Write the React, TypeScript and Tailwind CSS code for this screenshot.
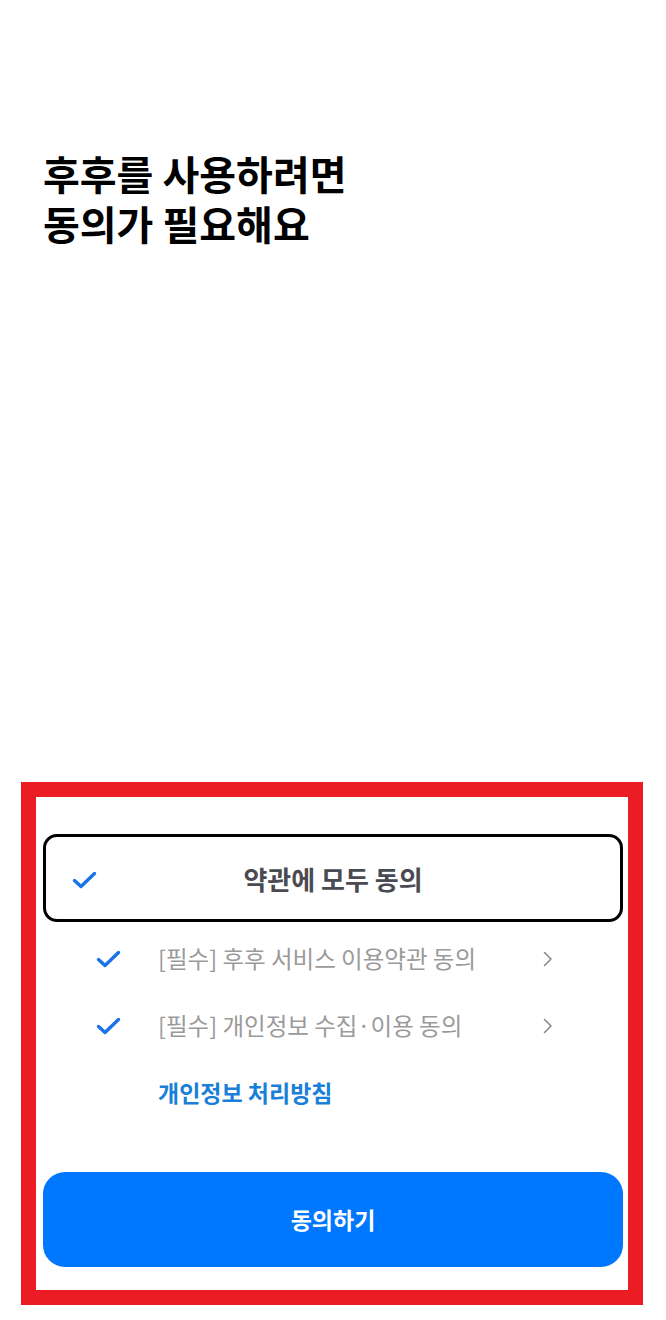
import React from "react";

const font = { fontFamily: '"Noto Sans CJK KR", "Noto Sans", sans-serif' };

function Check() {
  return (
    <svg width="25" height="18" viewBox="0 0 25 18" fill="none">
      <path d="M2.5 9.5 L9 15.5 L22.5 2.5" stroke="#1a73e8" strokeWidth="3.4" strokeLinecap="round" strokeLinejoin="round" />
    </svg>
  );
}

function Chevron() {
  return (
    <svg width="10" height="16" viewBox="0 0 10 16" fill="none">
      <path d="M1.5 1.5 L8 8 L1.5 14.5" stroke="#8a8a8a" strokeWidth="1.6" strokeLinecap="round" strokeLinejoin="round" />
    </svg>
  );
}

function Row({ text }: { text: string }) {
  return (
    <div className="flex h-[67px] items-center">
      <div className="flex w-[78px] justify-end">
        <Check />
      </div>
      <span className="ml-[37px] flex-1 text-[23.5px] text-[#9a9a9a]">{text}</span>
      <div className="mr-[70px]">
        <Chevron />
      </div>
    </div>
  );
}

export default function App() {
  return (
    <div className="flex h-[1320px] w-[666px] flex-col bg-white" style={font}>
      <h1 className="flex flex-col pl-[43px] pt-[148px] text-[40px] font-bold leading-[50px] text-black">
        <span className="block h-[50px]">후후를 사용하려면</span>
        <span className="block h-[50px]">동의가 필요해요</span>
      </h1>
      <div className="mt-auto mb-[15px] ml-[21px] w-[622px] border-[15px] border-[#ec1c24] pl-[7px] pr-[5px] pt-[37px] pb-[23px]">
        <div className="relative flex h-[88px] items-center justify-center rounded-[14px] border-[3px] border-black">
          <div className="absolute left-[26px] top-[34px]">
            <Check />
          </div>
          <span className="text-[26px] font-bold text-[#4a4a52]">약관에 모두 동의</span>
        </div>
        <div className="mt-[3px]">
          <Row text="[필수] 후후 서비스 이용약관 동의" />
          <Row text="[필수] 개인정보 수집·이용 동의" />
          <div className="flex h-[67px] items-center pl-[115px]">
            <span className="text-[23px] font-semibold text-[#1a7fd8]">개인정보 처리방침</span>
          </div>
        </div>
        <button className="mt-[46px] flex h-[95px] w-[580px] items-center justify-center rounded-[22px] bg-[#0077ff]">
          <span className="text-[23px] font-bold text-white">동의하기</span>
        </button>
      </div>
    </div>
  );
}
